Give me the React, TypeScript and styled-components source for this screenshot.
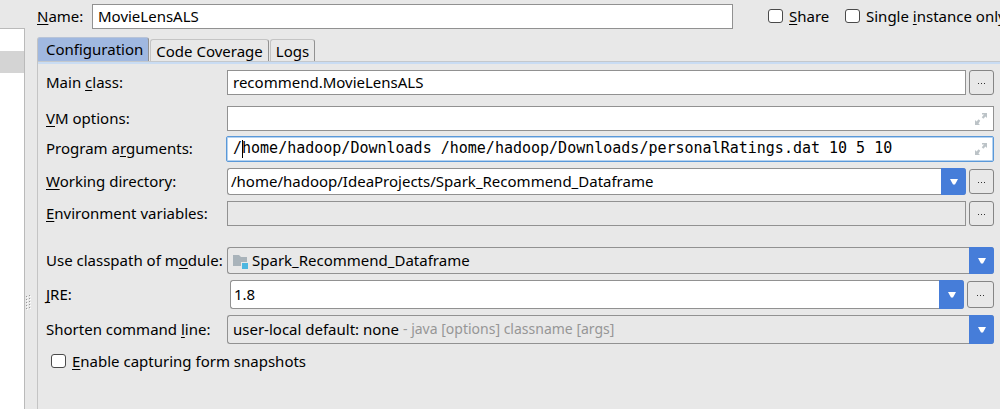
import React from "react";
import styled, { createGlobalStyle, css } from "styled-components";

const BG = "#e8e8e8";
const LINE = "#919191";
const BLUE = "#467dd9";

const Global = createGlobalStyle`
  *, *::before, *::after { box-sizing: border-box; }
  html, body, #root { height: 100%; }
  body {
    margin: 0;
    background: ${BG};
    color: #000;
    font: 15px/20px "Noto Sans", "Open Sans", sans-serif;
    overflow: hidden;
  }
  input, button, select { font: inherit; color: inherit; margin: 0; }
  u {
    text-decoration-thickness: 1px;
    text-underline-offset: 2px;
    text-decoration-skip-ink: none;
  }
`;

const Window = styled.div`
  display: flex;
  min-height: 100%;
  background: ${BG};
`;

const Sidebar = styled.aside`
  flex: 0 0 25px;
  margin-top: 28px;
  background: #fff;
  border: solid #bababa;
  border-width: 1px 1px 0 0;
`;

const SelectedItem = styled.div`
  height: 22px;
  margin-top: 22px;
  background: #d4d4d4;
`;

const Splitter = styled.div`
  flex: 0 0 12px;
  padding: 295px 0 0 1px;
  svg { display: block; }
`;

const Main = styled.main`
  flex: 1;
  min-width: 0;
  display: flex;
  flex-direction: column;
`;

const Header = styled.div`
  display: flex;
  align-items: center;
  padding-top: 4px;
  white-space: nowrap;
`;

const NameLabel = styled.label`
  flex: 0 0 55px;
  padding-bottom: 2px;
`;

const HeaderChecks = styled.div`
  flex: 0 0 232px;
  min-width: 0;
  display: flex;
  gap: 17px;
  margin-left: 35px;
  padding-bottom: 2px;
`;

const CheckLabel = styled.label<{ $wide?: boolean }>`
  display: flex;
  align-items: center;
  gap: 6px;
  flex: 0 0 ${(p) => (p.$wide ? "auto" : "60px")};
  min-width: 0;
`;

const Check = styled.input.attrs({ type: "checkbox" })`
  appearance: none;
  flex: none;
  width: 15px;
  height: 14px;
  background: #fff;
  border: 1px solid #4a4a4a;
  border-radius: 3px;
  &:checked { background: ${BLUE}; }
`;

const SnapshotLabel = styled(CheckLabel)`
  flex: 0 0 auto;
  padding-left: 5px;
`;

const Tabs = styled.div`
  display: flex;
  align-items: flex-end;
  gap: 1px;
  height: 32px;
`;

const Tab = styled.button<{ $active?: boolean }>`
  height: 22px;
  padding: 0 5px;
  background: ${BG};
  border: solid #c4c4c4;
  border-width: 1px 1px 0;
  border-right-color: #919191;
  border-radius: 3px 3px 0 0;
  line-height: 20px;
  white-space: nowrap;
  ${(p) =>
    p.$active &&
    css`
      height: 24px;
      padding: 0 5px 2px 8px;
      background: #a0b8e0;
      border-top-color: #b8c4d8;
    `}
`;

const Panel = styled.section`
  flex: 1;
  border-left: 1px solid #c4c4c4;
`;

const PanelEdge = styled.div`
  height: 3px;
  background: #c9dcf3;
  border-top: 1px solid #c4c8cc;
`;

const Form = styled.form`
  padding: 6px 6px 0 8px;
`;

const Row = styled.div<{ $space?: number }>`
  display: flex;
  align-items: center;
  gap: 3px;
  margin-top: ${(p) => p.$space ?? 0}px;
`;

const RowLabel = styled.label`
  flex: 0 0 178px;
  padding-bottom: 2px;
  white-space: nowrap;
`;

const TextField = styled.input.attrs({ type: "text" })`
  flex: 1;
  min-width: 0;
  height: 25px;
  padding: 0 5px 2px;
  background: #fff;
  border: 1px solid ${LINE};
  border-radius: 0;
  outline: none;
  &:read-only { background: ${BG}; }
`;

const Expandable = styled.div<{ $focused?: boolean }>`
  position: relative;
  flex: 1;
  min-width: 0;
  display: flex;
  align-items: center;
  height: 25px;
  padding: 0 5px;
  background: #fff;
  border: 1px solid ${LINE};
  font: 15px/20px "DejaVu Sans Mono", monospace;
  ${(p) =>
    p.$focused &&
    css`
      height: 26px;
      margin-left: -1px;
      padding-left: 6px;
      border-color: #5a98d8;
      border-radius: 2px;
      box-shadow: inset 0 0 0 1px #b4d2f0;
    `}
`;

const PlainInput = styled.input.attrs({ type: "text" })`
  flex: 1;
  min-width: 0;
  height: 22px;
  padding: 0 0 2px;
  background: none;
  border: 0;
  outline: none;
`;

const Caret = styled.span`
  position: absolute;
  left: 15px;
  top: 3px;
  width: 1px;
  height: 18px;
  background: #000;
`;

const ExpandButton = styled.button`
  display: flex;
  padding: 0;
  background: none;
  border: 0;
`;

const Combo = styled.div<{ $height: number; $editable?: boolean; $inset?: number }>`
  flex: 1;
  min-width: 0;
  display: flex;
  align-items: center;
  height: ${(p) => p.$height}px;
  margin-left: ${(p) => p.$inset ?? 0}px;
  padding-left: ${(p) => (p.$editable ? 3 : 5)}px;
  background: ${(p) => (p.$editable ? "#fff" : BG)};
  border: 1px solid ${LINE};
  border-right: 0;
  border-radius: 3px;
`;

const Select = styled.select<{ $grow?: boolean }>`
  appearance: none;
  flex: ${(p) => (p.$grow ? "1" : "0 0 auto")};
  min-width: 0;
  height: 22px;
  padding: 0 0 2px;
  background: none;
  border: 0;
  outline: none;
`;

const Hint = styled.span`
  flex: 1;
  padding: 0 0 2px 3px;
  font-size: 14px;
  color: #969696;
  white-space: nowrap;
`;

const ArrowButton = styled.button`
  flex: 0 0 25px;
  align-self: stretch;
  display: flex;
  align-items: center;
  justify-content: center;
  margin: -1px 0;
  padding: 0;
  background: ${BLUE};
  border: 0;
  border-radius: 0 3px 3px 0;
`;

const Browse = styled.button<{ $large?: boolean }>`
  flex: 0 0 ${(p) => (p.$large ? 27 : 25)}px;
  height: ${(p) => (p.$large ? 27 : 25)}px;
  display: flex;
  align-items: center;
  justify-content: center;
  padding: 0;
  background: ${BG};
  border: 1px solid #858585;
  border-radius: 3px;
`;

const FolderIcon = styled.svg`
  flex: none;
  margin-right: 3px;
`;

function Arrow({ label }: { label: string }) {
  return (
    <ArrowButton type="button" aria-label={label}>
      <svg width="8" height="6" viewBox="0 0 8 6">
        <path d="M0 0h8L5 5.5H3z" fill="#fff" />
      </svg>
    </ArrowButton>
  );
}

function BrowseButton({ label, large }: { label: string; large?: boolean }) {
  return (
    <Browse type="button" aria-label={label} $large={large}>
      <svg width="8" height="2" viewBox="0 0 8 2">
        <path d="M0 1h1v1H0zM3 1h1v1H3zM6 1h1v1H6z" fill="#333" />
      </svg>
    </Browse>
  );
}

function Expand({ label }: { label: string }) {
  return (
    <ExpandButton type="button" aria-label={label}>
      <svg width="13" height="12" viewBox="0 0 13 12">
        <g fill="#bcc3c7">
          <path d="M7 0h5v5l-1.5-1.5L8.3 5.7 6.8 4.2 9 1.5H7z" />
          <path d="M0 7l1.5 1.5L3.7 6.3l1.5 1.5L3.5 10.5 5 12H0z" />
        </g>
      </svg>
    </ExpandButton>
  );
}

export default function App() {
  return (
    <>
      <Global />
      <Window>
        <Sidebar>
          <SelectedItem />
        </Sidebar>
        <Splitter>
          <svg width="5" height="15" viewBox="0 0 5 15">
            {[0, 3, 6, 9, 12].map((y) => (
              <React.Fragment key={y}>
                <path d={`M1 ${y + 2}h1v1H1zM4 ${y + 1}h1v1H4z`} fill="#fff" />
                <path d={`M0 ${y + 1}h1v1H0zM3 ${y}h1v1H3z`} fill="#999" />
              </React.Fragment>
            ))}
          </svg>
        </Splitter>
        <Main>
          <Header>
            <NameLabel htmlFor="name"><u>N</u>ame:</NameLabel>
            <TextField id="name" defaultValue="MovieLensALS" />
            <HeaderChecks>
              <CheckLabel><Check /><span><u>S</u>hare</span></CheckLabel>
              <CheckLabel $wide><Check /><span>Single <u>i</u>nstance only</span></CheckLabel>
            </HeaderChecks>
          </Header>
          <Tabs role="tablist">
            <Tab type="button" role="tab" aria-selected $active>Configuration</Tab>
            <Tab type="button" role="tab">Code Coverage</Tab>
            <Tab type="button" role="tab">Logs</Tab>
          </Tabs>
          <Panel>
            <PanelEdge />
            <Form>
              <Row>
                <RowLabel htmlFor="main">Main <u>c</u>lass:</RowLabel>
                <TextField id="main" defaultValue="recommend.MovieLensALS" />
                <BrowseButton label="Browse main class" />
              </Row>
              <Row $space={11}>
                <RowLabel htmlFor="vm"><u>V</u>M options:</RowLabel>
                <Expandable>
                  <PlainInput id="vm" />
                  <Expand label="Expand VM options" />
                </Expandable>
              </Row>
              <Row $space={5}>
                <RowLabel htmlFor="args">Program a<u>r</u>guments:</RowLabel>
                <Expandable $focused>
                  <PlainInput
                    id="args"
                    defaultValue="/home/hadoop/Downloads /home/hadoop/Downloads/personalRatings.dat 10 5 10"
                  />
                  <Caret />
                  <Expand label="Expand program arguments" />
                </Expandable>
              </Row>
              <Row $space={6}>
                <RowLabel htmlFor="dir"><u>W</u>orking directory:</RowLabel>
                <Combo $height={27} $editable>
                  <PlainInput id="dir" defaultValue="/home/hadoop/IdeaProjects/Spark_Recommend_Dataframe" />
                  <Arrow label="Recent directories" />
                </Combo>
                <BrowseButton label="Browse working directory" />
              </Row>
              <Row $space={6}>
                <RowLabel htmlFor="env"><u>E</u>nvironment variables:</RowLabel>
                <TextField id="env" readOnly />
                <BrowseButton label="Edit environment variables" />
              </Row>
              <Row $space={21}>
                <RowLabel htmlFor="module">Use classpath of m<u>o</u>dule:</RowLabel>
                <Combo $height={27}>
                  <FolderIcon width="16" height="16" viewBox="0 0 16 16">
                    <path d="M0 2h6l2 2h6v5H8v4H0z" fill="#a9b3ba" />
                    <path d="M9 10h6v6H9z" fill="#4cb6e0" />
                  </FolderIcon>
                  <Select id="module" $grow>
                    <option>Spark_Recommend_Dataframe</option>
                  </Select>
                  <Arrow label="Choose module" />
                </Combo>
              </Row>
              <Row $space={6}>
                <RowLabel htmlFor="jre"><u>J</u>RE:</RowLabel>
                <Combo $height={29} $editable $inset={3}>
                  <PlainInput id="jre" defaultValue="1.8" />
                  <Arrow label="Choose JRE" />
                </Combo>
                <BrowseButton label="Browse JRE" large />
              </Row>
              <Row $space={6}>
                <RowLabel htmlFor="shorten">Shorten command <u>l</u>ine:</RowLabel>
                <Combo $height={29}>
                  <Select id="shorten">
                    <option>user-local default: none</option>
                  </Select>
                  <Hint>- java [options] classname [args]</Hint>
                  <Arrow label="Choose shortening" />
                </Combo>
              </Row>
              <Row $space={7}>
                <SnapshotLabel>
                  <Check />
                  <span><u>E</u>nable capturing form snapshots</span>
                </SnapshotLabel>
              </Row>
            </Form>
          </Panel>
        </Main>
      </Window>
    </>
  );
}
